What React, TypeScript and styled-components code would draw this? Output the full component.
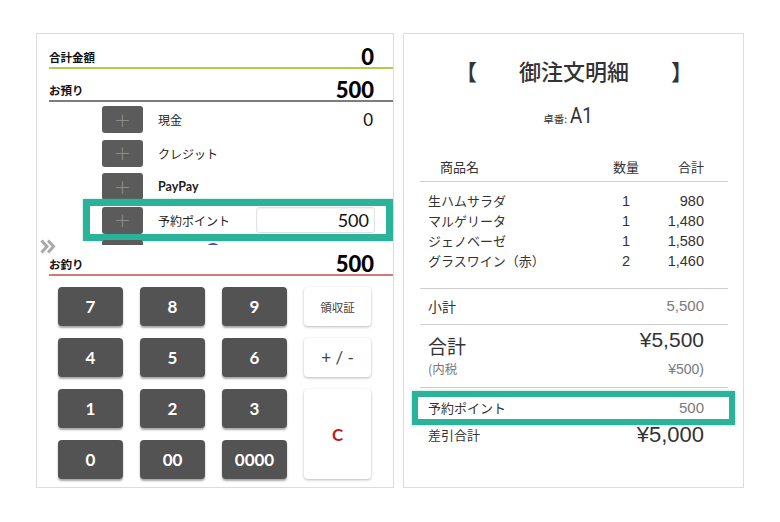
import styled, { createGlobalStyle } from "styled-components";

const GlobalStyle = createGlobalStyle`
  html, body {
    margin: 0;
    padding: 0;
    background: #ffffff;
  }
  body {
    font-family: "Noto Sans CJK JP", "Noto Sans", sans-serif;
    color: #222;
  }
`;

const colors = {
  border: "#dcdcdc",
  teal: "#2bb39a",
  key: "#535353",
  green: "#aecb54",
  red: "#d27a7a",
};

const jp = `"Noto Sans CJK JP", sans-serif`;
const geo = `"Lato", "Noto Sans CJK JP", sans-serif`;
const num = `"Liberation Sans", "Noto Sans CJK JP", sans-serif`;

const Page = styled.div`
  display: flex;
  gap: 9px;
  padding: 33px 0 0 36px;
  width: 780px;
  height: 522px;
  box-sizing: border-box;
`;

/* ---------- register panel ---------- */

const RegisterPanel = styled.div`
  position: relative;
  width: 358px;
  height: 455px;
  border: 1px solid ${colors.border};
  box-sizing: border-box;
  display: flex;
  flex-direction: column;
`;

const Summary = styled.div<{ $top?: number }>`
  padding: ${(p) => p.$top ?? 13}px 0 0 12px;
`;

const SummaryRow = styled.div<{ $line: string; $gap?: number }>`
  display: flex;
  align-items: center;
  justify-content: space-between;
  height: 20px;
  margin-top: ${(p) => p.$gap ?? 0}px;
  padding-right: 19px;
  border-bottom: 2px solid ${(p) => p.$line};
`;

const SummaryLabel = styled.span`
  font-family: ${jp};
  font-size: 11.5px;
  font-weight: 700;
  color: #111;
`;

const SummaryValue = styled.span`
  font-family: ${geo};
  font-size: 22px;
  font-weight: 900;
  line-height: 1;
  color: #000;
`;

const PayList = styled.div`
  position: relative;
  height: 143px;
  padding-top: 4px;
  box-sizing: border-box;
  overflow: hidden;
`;

const PayRow = styled.div`
  position: relative;
  display: flex;
  align-items: center;
  height: 27px;
  margin-bottom: 6.5px;
  padding: 0 18px 0 65px;
`;

const PlusButton = styled.div`
  flex: none;
  width: 41px;
  height: 27px;
  border-radius: 3px;
  background: #5b5b5b;
  color: #8c8c8c;
  display: flex;
  align-items: center;
  justify-content: center;
  font-family: "DejaVu Sans", sans-serif;
  font-size: 20px;
  font-weight: 300;
  line-height: 1;
`;

const PayLabel = styled.span<{ $latin?: boolean }>`
  flex: 1;
  margin-left: 15px;
  font-family: ${(p) => (p.$latin ? geo : jp)};
  font-size: ${(p) => (p.$latin ? "12.5px" : "12px")};
  font-weight: ${(p) => (p.$latin ? 700 : 400)};
  color: #222;
`;

const PayValue = styled.span`
  font-family: ${geo};
  font-size: 17px;
  color: #111;
  padding-right: 2px;
`;

const AmountBox = styled.div`
  width: 119px;
  height: 26px;
  box-sizing: border-box;
  border: 1px solid #e2e2e2;
  border-radius: 3px;
  box-shadow: inset 0 1px 2px rgba(0, 0, 0, 0.06);
  display: flex;
  align-items: center;
  justify-content: flex-end;
  padding-right: 5px;
  font-family: ${geo};
  font-size: 18px;
  color: #111;
`;

const Highlight = styled.div<{ $inset: string }>`
  position: absolute;
  inset: ${(p) => p.$inset};
  border: 7px solid ${colors.teal};
  box-sizing: border-box;
  pointer-events: none;
  box-shadow: 0 0 2px rgba(43, 179, 154, 0.5);
`;

const PartialRest = styled.div`
  position: relative;
  flex: 1;
  align-self: flex-start;
  margin-top: 5px;
  border-top: 1px solid #e4e4e4;
`;

const BrandDot = styled.div`
  position: absolute;
  left: 62px;
  top: -3px;
  width: 16px;
  height: 16px;
  border-radius: 50%;
  background: #4a4fc2;
`;

const DrawerHandle = styled.div`
  position: absolute;
  left: 3px;
  top: 201px;
  width: 16px;
  height: 15px;
`;

const Keypad = styled.div`
  display: grid;
  grid-template-columns: 65px 65px 65px 67px;
  grid-template-rows: repeat(4, 39px);
  column-gap: 17px;
  row-gap: 12px;
  margin-top: 11px;
  padding-left: 21px;
`;

const NumKey = styled.div`
  border-radius: 4px;
  background: ${colors.key};
  box-shadow: 0 2px 2px rgba(0, 0, 0, 0.35);
  color: #fff;
  display: flex;
  align-items: center;
  justify-content: center;
  font-family: ${geo};
  font-size: 17px;
  font-weight: 700;
`;

const SideKey = styled.div<{ $tall?: boolean; $tone?: "label" | "sign" | "clear" }>`
  grid-column: 4;
  grid-row: ${(p) => (p.$tall ? "3 / span 2" : "auto")};
  border-radius: 4px;
  background: #fff;
  box-shadow: 0 1px 3px rgba(0, 0, 0, 0.28);
  display: flex;
  align-items: center;
  justify-content: center;
  font-family: ${(p) => (p.$tone === "label" ? jp : geo)};
  font-size: ${(p) => (p.$tone === "label" ? "11.5px" : "17px")};
  font-weight: ${(p) => (p.$tone === "clear" ? 700 : 400)};
  color: ${(p) => (p.$tone === "clear" ? "#c41a1a" : "#444")};
`;

/* ---------- receipt panel ---------- */

const ReceiptPanel = styled.div`
  width: 341px;
  height: 455px;
  border: 1px solid ${colors.border};
  box-sizing: border-box;
  padding: 21px 15px 0 16px;
  font-family: ${jp};
  color: #333;
`;

const Title = styled.div`
  display: flex;
  justify-content: center;
  gap: 42px;
  font-size: 22px;
  font-weight: 500;
  line-height: 30px;
  color: #333;
`;

const TableNo = styled.div`
  display: flex;
  justify-content: center;
  align-items: baseline;
  margin-top: 19px;
  padding-right: 8px;
  height: 24px;
`;

const TableNoLabel = styled.span`
  font-size: 10.5px;
  margin-right: 3px;
`;

const TableNoValue = styled.span`
  font-family: "Roboto", sans-serif;
  font-size: 22px;
  line-height: 24px;
  transform: scaleX(0.85);
  transform-origin: left;
`;

const ItemGrid = styled.div`
  display: grid;
  grid-template-columns: 178px 40px 58px;
  align-items: center;
  padding: 0 24px 0 8px;
  font-size: 13px;
  line-height: 20px;
  color: #333;
`;

const HeadGrid = styled(ItemGrid)`
  margin-top: 29px;
  padding-bottom: 4px;
  border-bottom: 1px solid #cfcfcf;
`;

const Items = styled.div`
  margin-top: 9px;
  padding-bottom: 17px;
  border-bottom: 1px solid #cfcfcf;
`;

const Cell = styled.span<{ $align?: "left" | "center" | "right"; $indent?: number }>`
  text-align: ${(p) => p.$align ?? "left"};
  padding-left: ${(p) => p.$indent ?? 0}px;
  font-family: ${(p) => (p.$align && p.$align !== "left" ? num : jp)};
  font-size: ${(p) => (p.$align && p.$align !== "left" ? "14.5px" : "13px")};
`;

const HeadCell = styled(Cell)`
  font-family: ${jp};
  font-size: 13px;
`;

const LineRow = styled.div<{ $gap?: number }>`
  display: flex;
  justify-content: space-between;
  align-items: center;
  margin-top: ${(p) => p.$gap ?? 0}px;
  padding: 0 24px 0 8px;
`;

const SubtotalBlock = styled.div`
  padding-bottom: 8px;
  border-bottom: 1px solid #cfcfcf;
`;

const Label = styled.span<{ $size?: number; $muted?: boolean }>`
  font-size: ${(p) => p.$size ?? 13}px;
  line-height: 20px;
  color: ${(p) => (p.$muted ? "#777" : "#333")};
`;

const Amount = styled.span<{ $size?: number; $muted?: boolean }>`
  font-family: ${num};
  font-size: ${(p) => p.$size ?? 15}px;
  line-height: 20px;
  color: ${(p) => (p.$muted ? "#7a7a7a" : "#333")};
`;

const TotalBlock = styled.div`
  padding-bottom: 8px;
  border-bottom: 1px solid #cfcfcf;
`;

const TotalRow = styled.div`
  display: flex;
  justify-content: space-between;
  align-items: flex-start;
  height: 26px;
  margin-top: 6px;
  padding: 0 24px 0 8px;
`;

const TotalLabel = styled.span`
  font-size: 19px;
  line-height: 26px;
  padding-top: 2px;
`;

const TotalAmount = styled.span`
  font-family: ${num};
  font-size: 21px;
  line-height: 16px;
  padding-top: 1px;
`;

const PointBox = styled.div`
  display: flex;
  justify-content: space-between;
  align-items: center;
  height: 34px;
  margin: 3px -7px 0 -8px;
  padding: 0 25px 0 10px;
  border: 6px solid ${colors.teal};
  box-sizing: border-box;
  box-shadow: 0 0 3px rgba(43, 179, 154, 0.45);
`;

const payments = [
  { label: "現金", value: "0" },
  { label: "クレジット" },
  { label: "PayPay", latin: true },
];

const items = [
  { name: "生ハムサラダ", qty: 1, price: "980" },
  { name: "マルゲリータ", qty: 1, price: "1,480" },
  { name: "ジェノベーゼ", qty: 1, price: "1,580" },
  { name: "グラスワイン（赤）", qty: 2, price: "1,460" },
];

const Chevrons = () => (
  <svg width="16" height="15" viewBox="0 0 16 15">
    <path d="M1.5 1.5 L7 7.5 L1.5 13.5" fill="none" stroke="#a9a9a9" strokeWidth="3" />
    <path d="M8 1.5 L13.5 7.5 L8 13.5" fill="none" stroke="#a9a9a9" strokeWidth="3" />
  </svg>
);

export default function App() {
  return (
    <>
      <GlobalStyle />
      <Page>
        <RegisterPanel>
          <Summary>
            <SummaryRow $line={colors.green}>
              <SummaryLabel>合計金額</SummaryLabel>
              <SummaryValue>0</SummaryValue>
            </SummaryRow>
            <SummaryRow $line="#7d7d7d" $gap={11}>
              <SummaryLabel>お預り</SummaryLabel>
              <SummaryValue>500</SummaryValue>
            </SummaryRow>
          </Summary>

          <PayList>
            {payments.map((p) => (
              <PayRow key={p.label}>
                <PlusButton>+</PlusButton>
                <PayLabel $latin={p.latin}>{p.label}</PayLabel>
                {p.value && <PayValue>{p.value}</PayValue>}
              </PayRow>
            ))}
            <PayRow>
              <PlusButton>+</PlusButton>
              <PayLabel>予約ポイント</PayLabel>
              <AmountBox>500</AmountBox>
              <Highlight $inset="-8px 0 -7px 46px" />
            </PayRow>
            <PayRow>
              <PlusButton />
              <PartialRest>
                <BrandDot />
              </PartialRest>
            </PayRow>
          </PayList>

          <DrawerHandle>
            <Chevrons />
          </DrawerHandle>

          <Summary $top={0}>
            <SummaryRow $line={colors.red} $gap={9}>
              <SummaryLabel>お釣り</SummaryLabel>
              <SummaryValue>500</SummaryValue>
            </SummaryRow>
          </Summary>

          <Keypad>
            <NumKey>7</NumKey>
            <NumKey>8</NumKey>
            <NumKey>9</NumKey>
            <SideKey $tone="label">領収証</SideKey>
            <NumKey>4</NumKey>
            <NumKey>5</NumKey>
            <NumKey>6</NumKey>
            <SideKey $tone="sign">+ / -</SideKey>
            <NumKey>1</NumKey>
            <NumKey>2</NumKey>
            <NumKey>3</NumKey>
            <SideKey $tall $tone="clear">C</SideKey>
            <NumKey>0</NumKey>
            <NumKey>00</NumKey>
            <NumKey>0000</NumKey>
          </Keypad>
        </RegisterPanel>

        <ReceiptPanel>
          <Title>
            <span>【</span>
            <span>御注文明細</span>
            <span>】</span>
          </Title>
          <TableNo>
            <TableNoLabel>卓番:</TableNoLabel>
            <TableNoValue>A1</TableNoValue>
          </TableNo>

          <HeadGrid>
            <HeadCell $indent={12}>商品名</HeadCell>
            <HeadCell $align="center">数量</HeadCell>
            <HeadCell $align="right">合計</HeadCell>
          </HeadGrid>

          <Items>
            {items.map((it) => (
              <ItemGrid key={it.name}>
                <Cell>{it.name}</Cell>
                <Cell $align="center">{it.qty}</Cell>
                <Cell $align="right">{it.price}</Cell>
              </ItemGrid>
            ))}
          </Items>

          <SubtotalBlock>
            <LineRow $gap={7}>
              <Label $size={14}>小計</Label>
              <Amount $muted>5,500</Amount>
            </LineRow>
          </SubtotalBlock>

          <TotalBlock>
            <TotalRow>
              <TotalLabel>合計</TotalLabel>
              <TotalAmount>¥5,500</TotalAmount>
            </TotalRow>
            <LineRow $gap={2}>
              <Label $size={12.5} $muted>(内税</Label>
              <Amount $size={14} $muted>¥500)</Amount>
            </LineRow>
          </TotalBlock>

          <PointBox>
            <Label>予約ポイント</Label>
            <Amount $muted>500</Amount>
          </PointBox>

          <LineRow>
            <Label>差引合計</Label>
            <Amount $size={22}>¥5,000</Amount>
          </LineRow>
        </ReceiptPanel>
      </Page>
    </>
  );
}
